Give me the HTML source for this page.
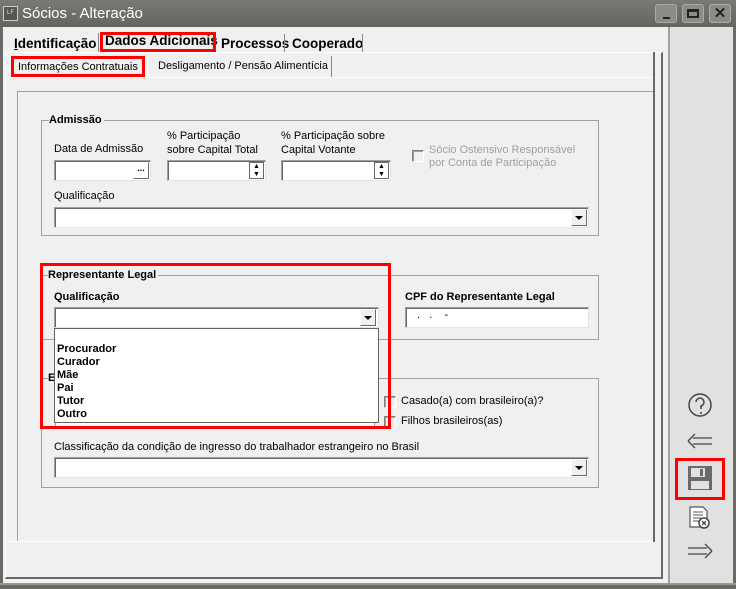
<!DOCTYPE html>
<html><head><meta charset="utf-8"><style>
*{box-sizing:border-box;margin:0;padding:0}
body{width:736px;height:589px;background:#f0f0f0;font-family:"Liberation Sans",Arial,sans-serif;font-size:11px;color:#000;position:relative;overflow:hidden}
.a{position:absolute}
.fld{position:absolute;background:#fff;border:1px solid #a0a0a0;border-right-color:#e3e3e3;border-bottom-color:#e3e3e3;box-shadow:inset 1px 1px 0 #696969}
.btn{position:absolute;background:#f0f0f0;border:1px solid #fff;border-right-color:#696969;border-bottom-color:#696969;width:16px;height:17px}
.btn:after{content:"";position:absolute;left:3px;top:6px;border:4px solid transparent;border-top:4px solid #000;border-bottom:0}
.lbl{position:absolute;font-size:11px;white-space:nowrap}
.b{font-weight:bold}
.red{position:absolute;border:3px solid #f00}
.grp{position:absolute;border:1px solid #a0a0a0}
.gt{position:absolute;background:#f0f0f0;font-weight:bold;padding-right:2px}
.chk{position:absolute;width:12px;height:12px;border:1px solid #808080;border-right-color:#fff;border-bottom-color:#fff;box-shadow:inset 1px 1px 0 #a0a0a0}
</style></head><body>
<div class="a" style="left:0;top:0;width:736px;height:27px;background:linear-gradient(#7a7a74,#65655f)"></div>
<div class="a" style="left:3px;top:6px;width:15px;height:15px;background:#555;border:1px solid #ccc;color:#ddd;font-size:6px;line-height:13px;text-align:center">LF</div>
<div class="lbl" style="left:22px;top:5px;font-size:15px;color:#fff">Sócios - Alteração</div>
<div class="a" style="left:655px;top:4px;width:22px;height:19px;background:#8c8c86;border:1px solid #aaa;border-radius:3px"><div class="a" style="left:7px;top:12px;width:7px;height:2px;background:#222"></div></div>
<div class="a" style="left:682px;top:4px;width:22px;height:19px;background:#8c8c86;border:1px solid #aaa;border-radius:3px"><div class="a" style="left:4px;top:4px;width:12px;height:9px;border:2px solid #222;border-top-width:3px"></div></div>
<div class="a" style="left:709px;top:4px;width:22px;height:19px;background:#8c8c86;border:1px solid #aaa;border-radius:3px;color:#222;font-weight:bold;font-size:15px;text-align:center;line-height:17px">✕</div>
<div class="a" style="left:0;top:27px;width:3px;height:562px;background:#6b6b66"></div>
<div class="a" style="left:733px;top:27px;width:3px;height:562px;background:#6b6b66"></div>
<div class="a" style="left:0;top:583px;width:736px;height:6px;background:#6b6b66;border-top:2px solid #999"></div>
<div class="a" style="left:668px;top:27px;width:65px;height:556px;background:#e1e1e1;border-left:2px solid #a0a0a0"></div>
<div class="a" style="left:5px;top:52px;width:658px;height:527px;border:1px solid #fff;border-right:2px solid #696969;border-bottom:2px solid #696969"></div>
<div class="lbl b" style="left:14px;top:36px;font-size:13.5px"><u>I</u>dentificação</div>
<div class="a" style="left:98px;top:33px;width:1px;height:19px;background:#888"></div>
<div class="lbl b" style="left:105px;top:33px;font-size:13.5px">Dados Adicionais</div>
<div class="red" style="left:100px;top:32px;width:116px;height:20px"></div>
<div class="lbl b" style="left:221px;top:36px;font-size:13.5px">Processos</div>
<div class="a" style="left:284px;top:34px;width:1px;height:18px;background:#888"></div>
<div class="lbl b" style="left:292px;top:36px;font-size:13.5px">Cooperado</div>
<div class="a" style="left:362px;top:34px;width:1px;height:18px;background:#888"></div>
<div class="a" style="left:8px;top:77px;width:645px;height:1px;background:#fff"></div>
<div class="lbl" style="left:18px;top:61px">Informações Contratuais</div>
<div class="red" style="left:11px;top:56px;width:134px;height:21px"></div>
<div class="a" style="left:147px;top:56px;width:1px;height:21px;background:#fff"></div>
<div class="lbl" style="left:158px;top:60px">Desligamento / Pensão Alimentícia</div>
<div class="a" style="left:331px;top:56px;width:1px;height:21px;background:#888"></div>
<div class="a" style="left:653px;top:52px;width:2px;height:490px;background:#696969"></div>
<div class="a" style="left:17px;top:91px;width:1px;height:451px;background:#a0a0a0"></div>
<div class="a" style="left:17px;top:91px;width:636px;height:1px;background:#a0a0a0"></div>
<div class="a" style="left:8px;top:541px;width:645px;height:1px;background:#fff"></div>
<div class="grp" style="left:41px;top:120px;width:558px;height:116px"></div>
<div class="gt" style="left:49px;top:114px">Admissão</div>
<div class="lbl" style="left:54px;top:143px">Data de Admissão</div>
<div class="fld" style="left:54px;top:160px;width:97px;height:21px"></div>
<div class="a" style="left:133px;top:162px;width:16px;height:17px;border:1px solid #696969;border-top-color:#fff;border-left-color:#fff;font-weight:bold;font-size:9px;text-align:center;line-height:10px">...</div>
<div class="lbl" style="left:167px;top:129px;line-height:14px">% Participação<br>sobre Capital Total</div>
<div class="fld" style="left:167px;top:160px;width:99px;height:21px"></div>
<div class="a" style="left:249px;top:162px;width:15px;height:17px;border:1px solid #696969;font-size:7px;line-height:8px;text-align:center">▲<br>▼</div>
<div class="lbl" style="left:281px;top:129px;line-height:14px">% Participação sobre<br>Capital Votante</div>
<div class="fld" style="left:281px;top:160px;width:110px;height:21px"></div>
<div class="a" style="left:374px;top:162px;width:15px;height:17px;border:1px solid #696969;font-size:7px;line-height:8px;text-align:center">▲<br>▼</div>
<div class="chk" style="left:412px;top:150px"></div>
<div class="lbl" style="left:429px;top:144px;color:#a0a0a0;line-height:13px">Sócio Ostensivo Responsável<br>por Conta de Participação</div>
<div class="lbl" style="left:54px;top:190px">Qualificação</div>
<div class="fld" style="left:54px;top:207px;width:535px;height:21px"></div>
<div class="btn" style="left:571px;top:209px"></div>
<div class="grp" style="left:41px;top:275px;width:558px;height:65px"></div>
<div class="gt" style="left:48px;top:269px">Representante Legal</div>
<div class="lbl b" style="left:54px;top:291px">Qualificação</div>
<div class="fld" style="left:54px;top:307px;width:325px;height:21px"></div>
<div class="btn" style="left:360px;top:309px"></div>
<div class="lbl b" style="left:405px;top:291px">CPF do Representante Legal</div>
<div class="fld" style="left:405px;top:307px;width:184px;height:21px"></div>
<div class="lbl" style="left:417px;top:309px">.&nbsp;&nbsp;&nbsp;.&nbsp;&nbsp;&nbsp;&nbsp;-</div>
<div class="grp" style="left:41px;top:378px;width:558px;height:110px"></div>
<div class="gt" style="left:48px;top:372px">E</div>
<div class="chk" style="left:384px;top:396px"></div>
<div class="lbl" style="left:401px;top:395px">Casado(a) com brasileiro(a)?</div>
<div class="chk" style="left:384px;top:416px"></div>
<div class="lbl" style="left:401px;top:415px">Filhos brasileiros(as)</div>
<div class="a" style="left:55px;top:418px;width:320px;height:10px;background:#fff;border:1px solid #a0a0a0"></div>
<div class="lbl" style="left:54px;top:441px">Classificação da condição de ingresso do trabalhador estrangeiro no Brasil</div>
<div class="fld" style="left:54px;top:457px;width:535px;height:21px"></div>
<div class="btn" style="left:571px;top:459px"></div>
<div class="a" style="left:54px;top:328px;width:325px;height:95px;background:#fff;border:1px solid #646464"></div>
<div class="lbl b" style="left:57px;top:343px;line-height:13px">Procurador<br>Curador<br>Mãe<br>Pai<br>Tutor<br>Outro</div>
<div class="red" style="left:40px;top:263px;width:351px;height:166px"></div>
<svg class="a" style="left:680px;top:385px" width="44" height="190" viewBox="0 0 44 190">
<g fill="none" stroke="#444" stroke-width="1.5">
<circle cx="20" cy="20" r="11"/>
<path d="M16 17a4 4 0 1 1 5 4v3"/>
<path d="M8 56l7-7M8 56l7 7M13 53h19M13 59h19" stroke-width="1.3"/>
<path d="M32 166l-7-7M32 166l-7 7M27 163h-19M27 169h-19" stroke-width="1.3"/>
</g>
<circle cx="21" cy="28" r="1" fill="#444"/>
<rect x="8" y="81" width="24" height="24" fill="#6a6a6a"/>
<rect x="11" y="83" width="14" height="9" fill="#e1e1e1"/>
<rect x="20" y="84" width="3" height="7" fill="#6a6a6a"/>
<rect x="11" y="96" width="18" height="8" fill="#e1e1e1"/>
<path d="M10 122h13l4 4v16H10z" fill="#fff" stroke="#555" stroke-width="1.2"/>
<path d="M13 127h10M13 130h10M13 133h8M13 136h7" stroke="#555"/>
<circle cx="24" cy="138" r="5" fill="#fff" stroke="#444" stroke-width="1.5"/>
<path d="M22 136l4 4M26 136l-4 4" stroke="#444" stroke-width="1.3"/>
</svg>
<div class="red" style="left:675px;top:458px;width:50px;height:42px"></div>
</body></html>
